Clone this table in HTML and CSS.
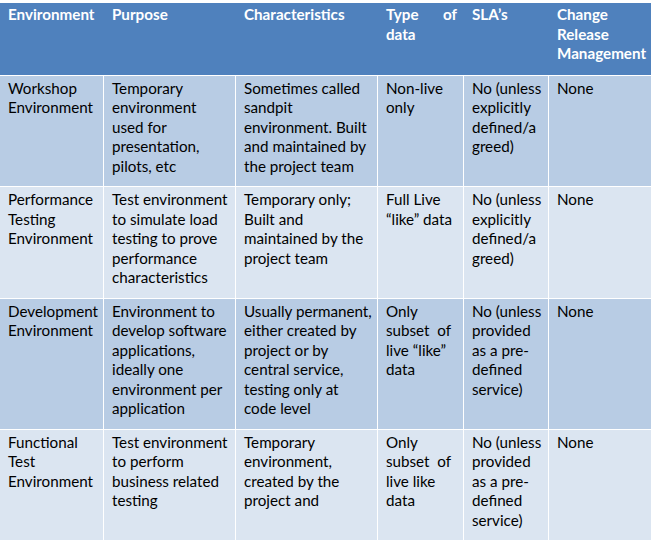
FILE: index.html
```html
<!DOCTYPE html>
<html>
<head>
<meta charset="utf-8">
<link rel="stylesheet" href="styles.css">
</head>
<body>
<table class="env">
  <colgroup>
    <col class="c1"><col class="c2"><col class="c3"><col class="c4"><col class="c5"><col class="c6">
  </colgroup>
  <thead>
    <tr>
      <th>Environment</th>
      <th>Purpose</th>
      <th>Characteristics</th>
      <th><span class="split"><span>Type</span><span>of</span></span>data</th>
      <th>SLA’s</th>
      <th>Change<br>Release<br>Management</th>
    </tr>
  </thead>
  <tbody>
    <tr class="odd">
      <td>Workshop<br>Environment</td>
      <td>Temporary<br>environment<br>used for<br>presentation,<br>pilots, etc</td>
      <td>Sometimes called<br>sandpit<br>environment. Built<br>and maintained by<br>the project team</td>
      <td>Non-live<br>only</td>
      <td>No (unless<br>explicitly<br>defined/a<br>greed)</td>
      <td>None</td>
    </tr>
    <tr class="even">
      <td>Performance<br>Testing<br>Environment</td>
      <td>Test environment<br>to simulate load<br>testing to prove<br>performance<br>characteristics</td>
      <td>Temporary only;<br>Built and<br>maintained by the<br>project team</td>
      <td>Full Live<br>“like” data</td>
      <td>No (unless<br>explicitly<br>defined/a<br>greed)</td>
      <td>None</td>
    </tr>
    <tr class="odd">
      <td>Development<br>Environment</td>
      <td>Environment to<br>develop software<br>applications,<br>ideally one<br>environment per<br>application</td>
      <td>Usually permanent,<br>either created by<br>project or by<br>central service,<br>testing only at<br>code level</td>
      <td>Only<br>subset&nbsp; of<br>live “like”<br>data</td>
      <td>No (unless<br>provided<br>as a pre-<br>defined<br>service)</td>
      <td>None</td>
    </tr>
    <tr class="even">
      <td>Functional<br>Test<br>Environment</td>
      <td>Test environment<br>to perform<br>business related<br>testing</td>
      <td>Temporary<br>environment,<br>created by the<br>project and</td>
      <td>Only<br>subset&nbsp; of<br>live like<br>data</td>
      <td>No (unless<br>provided<br>as a pre-<br>defined<br>service)</td>
      <td>None</td>
    </tr>
  </tbody>
</table>
</body>
</html>
```
FILE: styles.css
```css
html, body {
  margin: 0;
  padding: 0;
  background: #ffffff;
  overflow: hidden;
}

.env {
  margin-top: 3px;
  width: 651px;
  table-layout: fixed;
  border-collapse: separate;
  border-spacing: 0;
  font-family: Lato, "Open Sans", sans-serif;
  font-size: 15.2px;
  line-height: 19.5px;
  color: #000000;
}

.c1 { width: 104px; }
.c2 { width: 132px; }
.c3 { width: 142px; }
.c4 { width: 86px; }
.c5 { width: 85px; }
.c6 { width: 102px; }

.env th,
.env td {
  box-sizing: border-box;
  text-align: left;
  vertical-align: top;
  white-space: nowrap;
  overflow: visible;
}

.env th {
  background: #4f81bd;
  color: #ffffff;
  font-weight: 700;
  padding: 2px 7px 11px 8px;
  border-bottom: 1px solid #ffffff;
}

.env td {
  padding: 3px 7px 10px 8px;
  border-right: 1px solid #ffffff;
  border-bottom: 1px solid #ffffff;
}

.env td:last-child {
  border-right: none;
}

.odd td { background: #b8cce4; }
.even td { background: #dbe5f1; }

.split {
  display: flex;
  justify-content: space-between;
}
```
